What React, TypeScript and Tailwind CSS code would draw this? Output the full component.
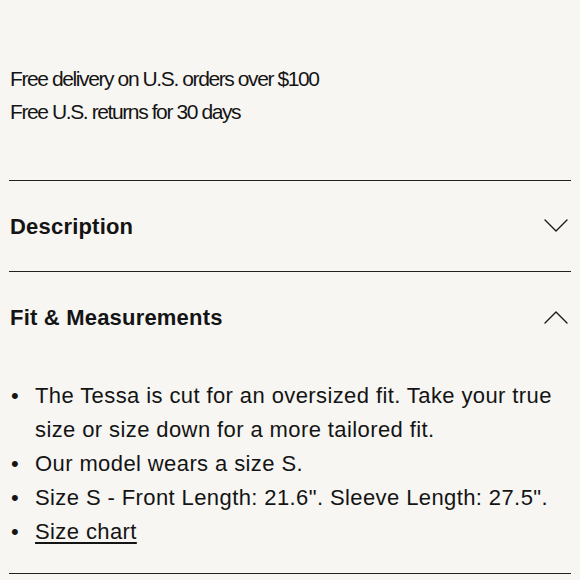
import { useState } from 'react'

function Chevron({ up }: { up?: boolean }) {
  return (
    <svg width="24" height="14" viewBox="0 0 24 14" fill="none" className="shrink-0">
      <path
        d={up ? 'M1 13 L12 2 L23 13' : 'M1 1 L12 12 L23 1'}
        stroke="#1a1a1a"
        strokeWidth="1.4"
        strokeLinecap="round"
        strokeLinejoin="round"
      />
    </svg>
  )
}

export default function App() {
  const [open, setOpen] = useState<string>('fit')

  return (
    <div className="w-[580px] h-[580px] overflow-hidden bg-[#f7f6f3] text-[#141414] px-[9px] font-['Liberation_Sans',Arial,sans-serif]">
      {/* Shipping notes */}
      <div className="pt-[62px] pl-[1px] text-[21px] leading-[33px] tracking-[-1.4px]">
        <p>Free delivery on U.S. orders over $100</p>
        <p>Free U.S. returns for 30 days</p>
      </div>

      <div className="mt-[52px] border-t-[1.5px] border-[#222]" />

      <button
        className="w-full h-[90px] flex items-center justify-between pl-[1px] pr-[3px]"
        onClick={() => setOpen(open === 'desc' ? '' : 'desc')}
      >
        <span className="text-[22px] font-bold tracking-[0.2px]">Description</span>
        <Chevron up={open === 'desc'} />
      </button>

      <div className="border-t-[1.5px] border-[#222]" />

      <button
        className="w-full h-[90px] flex items-center justify-between pl-[1px] pr-[3px]"
        onClick={() => setOpen(open === 'fit' ? '' : 'fit')}
      >
        <span className="text-[22px] font-bold tracking-[0.2px]">Fit &amp; Measurements</span>
        <Chevron up={open === 'fit'} />
      </button>

      <ul className="mt-[17px] text-[22px] leading-[34px] tracking-[0.4px]">
        {[
          'The Tessa is cut for an oversized fit. Take your true size or size down for a more tailored fit.',
          'Our model wears a size S.',
          'Size S - Front Length: 21.6". Sleeve Length: 27.5".',
        ].map((t) => (
          <li key={t} className="flex">
            <span className="w-[26px] shrink-0 pl-[2px]">•</span>
            <span>{t}</span>
          </li>
        ))}
        <li className="flex">
          <span className="w-[26px] shrink-0 pl-[2px]">•</span>
          <a href="#" className="underline underline-offset-[3px] decoration-[1.5px]">Size chart</a>
        </li>
      </ul>

      <div className="mt-[24px] border-t-[1.5px] border-[#222]" />
    </div>
  )
}
